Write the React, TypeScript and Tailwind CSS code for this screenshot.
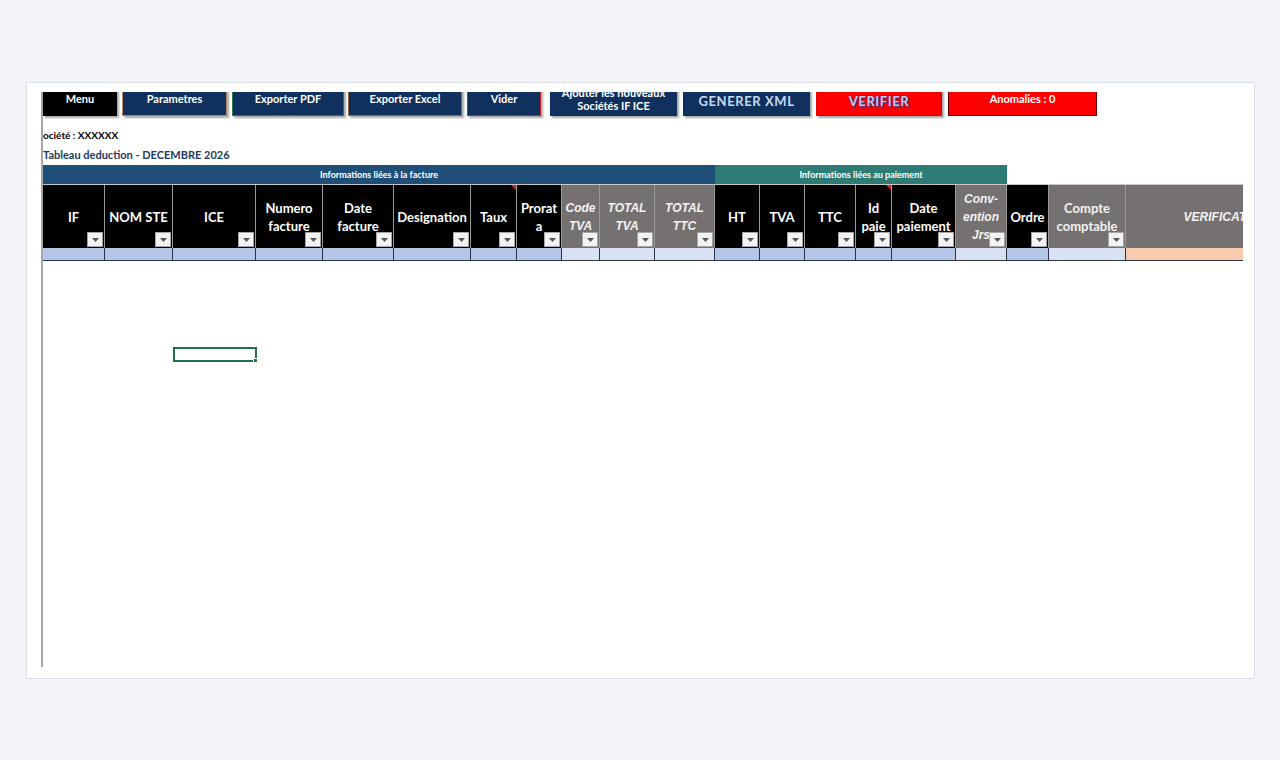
import React from "react";

type Col = {
  label: string[];
  w: number;
  grey?: boolean;
  italic?: boolean;
  comment?: boolean;
  noDrop?: boolean;
  fill: string;
};

const BLUE = "bg-[#b4c6e7]";
const PALE = "bg-[#d9e1f2]";

const cols: Col[] = [
  { label: ["IF"], w: 62, fill: BLUE },
  { label: ["NOM STE"], w: 68, fill: BLUE },
  { label: ["ICE"], w: 83, fill: BLUE },
  { label: ["Numero", "facture"], w: 67, fill: BLUE },
  { label: ["Date", "facture"], w: 71, fill: BLUE },
  { label: ["Designation"], w: 77, fill: BLUE },
  { label: ["Taux"], w: 46, comment: true, fill: BLUE },
  { label: ["Prorat", "a"], w: 45, fill: BLUE },
  { label: ["Code", "TVA"], w: 38, grey: true, italic: true, fill: PALE },
  { label: ["TOTAL", "TVA"], w: 55, grey: true, italic: true, fill: PALE },
  { label: ["TOTAL", "TTC"], w: 60, grey: true, italic: true, fill: PALE },
  { label: ["HT"], w: 45, fill: BLUE },
  { label: ["TVA"], w: 45, fill: BLUE },
  { label: ["TTC"], w: 51, fill: BLUE },
  { label: ["Id", "paie"], w: 36, comment: true, fill: BLUE },
  { label: ["Date", "paiement"], w: 64, fill: BLUE },
  { label: ["Conv-", "ention", "Jrs"], w: 51, grey: true, italic: true, fill: PALE },
  { label: ["Ordre"], w: 42, fill: BLUE },
  { label: ["Compte", "comptable"], w: 77, grey: true, fill: PALE },
  { label: ["VERIFICATION"], w: 200, grey: true, italic: true, noDrop: true, fill: "bg-[#f8cbad]" },
];

const buttons = [
  { text: "Menu", w: 74, ml: 0, cls: "bg-black text-white border border-black" },
  { text: "Parametres", w: 105, ml: 5, cls: "bg-[#10305e] text-white border border-[#b98565]" },
  { text: "Exporter PDF", w: 112, ml: 5, cls: "bg-[#10305e] text-white border border-[#2c7a52]" },
  { text: "Exporter Excel", w: 114, ml: 4, cls: "bg-[#10305e] text-white border border-[#8d6a3f]" },
  { text: "Vider", w: 74, ml: 5, cls: "bg-[#10305e] text-white border border-[#c0202a]" },
  { text: "", w: 127, ml: 9, cls: "bg-[#10305e] text-white border border-[#10305e]" },
  { text: "GENERER XML", w: 127, ml: 6, cls: "bg-[#10305e] text-[#c5d9f1] border border-[#10305e] text-[13px] tracking-[0.6px] pt-[5px]" },
  { text: "VERIFIER", w: 126, ml: 6, cls: "bg-[#ff0000] text-[#c4c8f2] border border-[#e00000] text-[13px] tracking-[0.6px] pt-[5px] font-black [text-shadow:0_0_1px_#2a2a6a,1px_1px_0_#4a3a8a]" },
  { text: "Anomalies : 0", w: 149, ml: 6, cls: "bg-[#ff0000] text-white border border-[#6b0000] shadow-none" },
];

const Dropdown = () => (
  <span className="absolute right-[1px] bottom-[1px] w-[16px] h-[15px] bg-[#f2f2f2] border border-[#a6a6a6] flex items-center justify-center">
    <svg width="7" height="4" viewBox="0 0 7 4">
      <path d="M0 0 L7 0 L3.5 4 Z" fill="#555" />
    </svg>
  </span>
);

const HeaderCell = ({ col }: { col: Col }) => (
  <div
    className={`relative h-full shrink-0 border-r border-[#9a9a9a] flex flex-col items-center justify-center pt-[1px] leading-[18px] ${col.grey ? "bg-[#767171] text-[#f2f2f2]" : "bg-black text-white"} ${col.italic ? "italic font-['Liberation_Sans',sans-serif] text-[12px] font-bold" : ""}`}
    style={{ width: col.w }}
  >
    {col.label.map((l) => (
      <span key={l} className="whitespace-nowrap">{l}</span>
    ))}
    {col.comment && (
      <span className="absolute top-0 right-0 w-0 h-0 border-t-[5px] border-l-[5px] border-t-[#e02020] border-l-transparent" />
    )}
    {!col.noDrop && <Dropdown />}
  </div>
);

export default function App() {
  return (
    <div className="w-[1280px] h-[760px] bg-[#f3f5f9] pt-[82px] pl-[26px] font-['Lato','Liberation_Sans',sans-serif]">
      <div className="w-[1229px] h-[597px] bg-white border border-[#d9dfe7] pl-[14px] pt-[9px]">
        <div className="w-[1202px] h-[575px] border-l-2 border-[#a6a6a6] overflow-hidden">
          {/* toolbar buttons, top of row scrolled out of view */}
          <div className="h-[27px] overflow-hidden flex items-start">
            {buttons.map((b, i) => (
              <div
                key={i}
                className={`-mt-[11px] h-[35px] shrink-0 flex items-center justify-center text-center font-bold text-[11px] leading-[13px] shadow-[2px_2px_2px_rgba(0,0,0,0.35)] ${b.cls}`}
                style={{ width: b.w, marginLeft: b.ml }}
              >
                {b.text === "" ? (
                  <span>
                    Ajouter les nouveaux
                    <br />
                    Sociétés IF ICE
                  </span>
                ) : (
                  b.text
                )}
              </div>
            ))}
          </div>

          <div className="mt-[9px] text-[10px] leading-[14px] font-bold text-black">ociété : XXXXXX</div>
          <div className="mt-[5px] text-[11px] leading-[16px] font-bold text-[#1f3864]">Tableau deduction - DECEMBRE 2026</div>

          {/* group bands */}
          <div className="mt-[2px] flex h-[19px] text-[9px] font-bold text-white">
            <div className="w-[672px] bg-[#1f4e79] flex items-center justify-center">Informations liées à la facture</div>
            <div className="w-[292px] bg-[#2e7b75] flex items-center justify-center">Informations liées au paiement</div>
          </div>

          {/* column headers */}
          <div className="flex h-[64px] text-[13px] font-bold border-t border-[#c8c8c8] w-max">
            {cols.map((c) => (
              <HeaderCell key={c.label.join("")} col={c} />
            ))}
          </div>

          {/* first data row */}
          <div className="flex h-[13px] border-b border-[#2b3445] w-max">
            {cols.map((c) => (
              <div
                key={c.label.join("")}
                className={`h-full shrink-0 border-r border-[#2b3445] ${c.fill}`}
                style={{ width: c.w }}
              />
            ))}
          </div>

          {/* active cell */}
          <div className="mt-[86px] ml-[130px] relative w-[84px] h-[15px] border-2 border-[#217346]">
            <span className="absolute -right-[3px] -bottom-[3px] w-[5px] h-[5px] bg-[#217346] border border-white" />
          </div>
        </div>
      </div>
    </div>
  );
}
